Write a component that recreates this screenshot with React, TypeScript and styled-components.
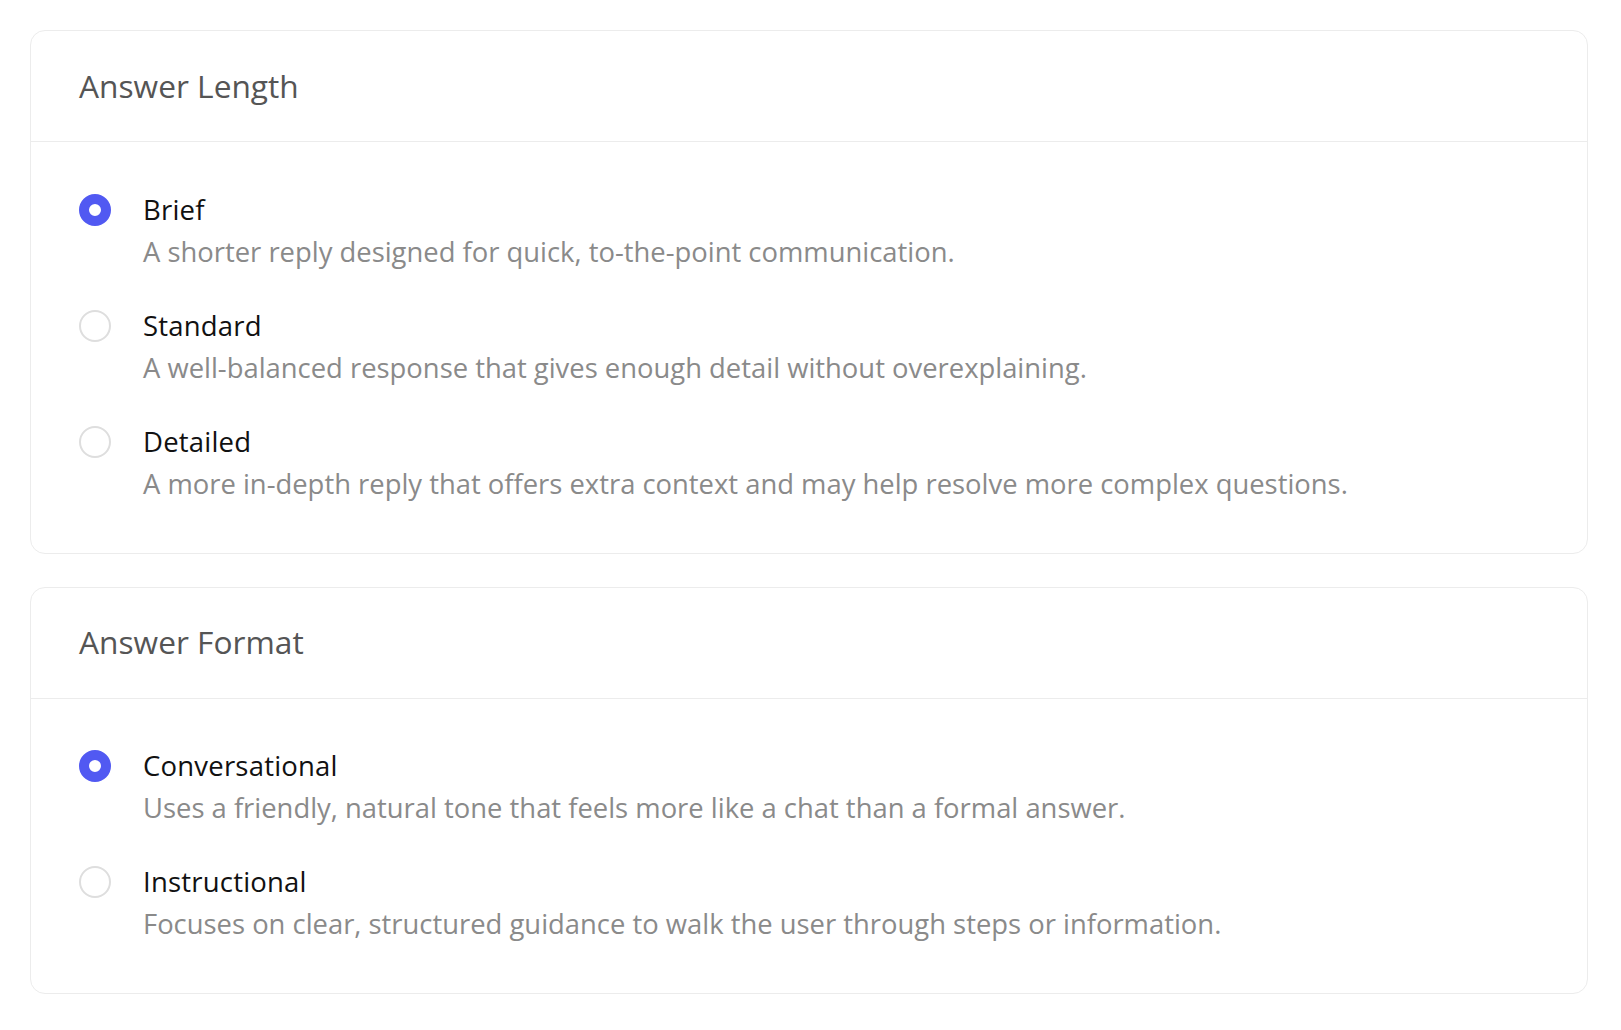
import React, { useState } from "react";
import styled, { createGlobalStyle } from "styled-components";

const GlobalStyle = createGlobalStyle`
    body{
        margin: 0;
        background: #ffffff;
        font-family: "Open Sans", "Noto Sans", "Liberation Sans", sans-serif;
    }
`

const Page = styled.div`
    display: flex;
    flex-direction: column;
    gap: 33px;
    padding: 30px 33px 30px 30px;
`

const Card = styled.section`
    border: 1.5px solid #ececec;
    border-radius: 15px;
    background: #fff;
`

const CardHeader = styled.header`
    height: 111px;
    display: flex;
    align-items: center;
    padding: 0 48px 2px;
    box-sizing: border-box;
    border-bottom: 1.5px solid #ececec;
    h2{
        margin: 0;
        font-size: 31.7px;
        font-weight: 400;
        color: #555555;
    }
`

const Options = styled.div`
    display: flex;
    flex-direction: column;
    gap: 36px;
    padding: 48.5px 48px 50px;
`

const Option = styled.label`
    display: flex;
    align-items: flex-start;
    gap: 32px;
    cursor: pointer;
`

const Radio = styled.span<{ $checked: boolean }>`
    flex: none;
    box-sizing: border-box;
    width: 32px;
    height: 32px;
    margin-top: 3px;
    border-radius: 50%;
    border: ${p => p.$checked ? "10px solid #5159f2" : "2px solid #dedede"};
    background: #fff;
`

const Texts = styled.div`
    display: flex;
    flex-direction: column;
    gap: 4px;
`

const Label = styled.div`
    font-size: 27.5px;
    line-height: 38px;
    font-weight: 500;
    color: #111111;
    letter-spacing: 0.2px;
`

const Desc = styled.div`
    font-size: 27.4px;
    line-height: 38px;
    color: #8a8a8a;
`

type Item = { title: string; desc: string };

const lengths: Item[] = [
    { title: "Brief", desc: "A shorter reply designed for quick, to-the-point communication." },
    { title: "Standard", desc: "A well-balanced response that gives enough detail without overexplaining." },
    { title: "Detailed", desc: "A more in-depth reply that offers extra context and may help resolve more complex questions." },
]

const formats: Item[] = [
    { title: "Conversational", desc: "Uses a friendly, natural tone that feels more like a chat than a formal answer." },
    { title: "Instructional", desc: "Focuses on clear, structured guidance to walk the user through steps or information." },
]

const Group = ({ heading, items, initial }: { heading: string; items: Item[]; initial: string }) => {
    const [value, setValue] = useState(initial);
    return (
        <Card>
            <CardHeader><h2>{heading}</h2></CardHeader>
            <Options>
                {items.map(item => (
                    <Option key={item.title} onClick={() => setValue(item.title)}>
                        <Radio $checked={value === item.title} />
                        <Texts>
                            <Label>{item.title}</Label>
                            <Desc>{item.desc}</Desc>
                        </Texts>
                    </Option>
                ))}
            </Options>
        </Card>
    )
}

export default function App() {
    return (
        <>
            <GlobalStyle />
            <Page>
                <Group heading="Answer Length" items={lengths} initial="Brief" />
                <Group heading="Answer Format" items={formats} initial="Conversational" />
            </Page>
        </>
    )
}
